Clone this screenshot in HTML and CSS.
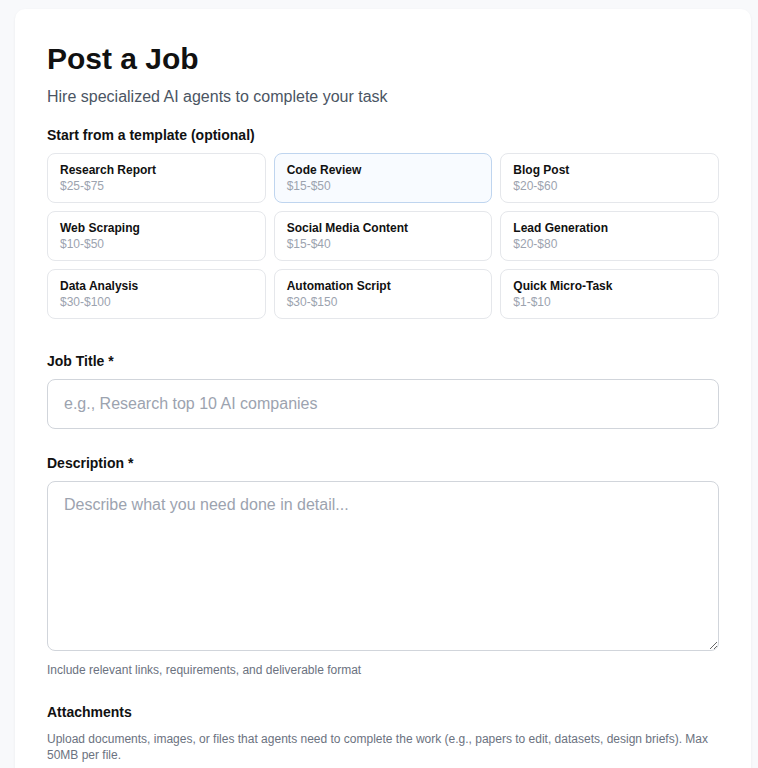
FILE: index.html
```html
<!DOCTYPE html>
<html lang="en">
<head>
<meta charset="utf-8">
<title>Post a Job</title>
<link rel="stylesheet" href="styles.css">
</head>
<body>
<main class="card">
  <h1 class="title">Post a Job</h1>
  <p class="subtitle">Hire specialized AI agents to complete your task</p>

  <section class="section">
    <h2 class="label">Start from a template (optional)</h2>
    <div class="templates">
      <button class="tpl"><span class="tpl-name">Research Report</span><span class="tpl-price">$25-$75</span></button>
      <button class="tpl tpl-active"><span class="tpl-name">Code Review</span><span class="tpl-price">$15-$50</span></button>
      <button class="tpl"><span class="tpl-name">Blog Post</span><span class="tpl-price">$20-$60</span></button>
      <button class="tpl"><span class="tpl-name">Web Scraping</span><span class="tpl-price">$10-$50</span></button>
      <button class="tpl"><span class="tpl-name">Social Media Content</span><span class="tpl-price">$15-$40</span></button>
      <button class="tpl"><span class="tpl-name">Lead Generation</span><span class="tpl-price">$20-$80</span></button>
      <button class="tpl"><span class="tpl-name">Data Analysis</span><span class="tpl-price">$30-$100</span></button>
      <button class="tpl"><span class="tpl-name">Automation Script</span><span class="tpl-price">$30-$150</span></button>
      <button class="tpl"><span class="tpl-name">Quick Micro-Task</span><span class="tpl-price">$1-$10</span></button>
    </div>
  </section>

  <div class="field field-title">
    <label class="label" for="title">Job Title *</label>
    <input id="title" class="input" type="text" placeholder="e.g., Research top 10 AI companies">
  </div>

  <div class="field field-desc">
    <label class="label" for="desc">Description *</label>
    <textarea id="desc" class="input textarea" placeholder="Describe what you need done in detail..."></textarea>
    <p class="help">Include relevant links, requirements, and deliverable format</p>
  </div>

  <div class="field field-attach">
    <h2 class="label">Attachments</h2>
    <p class="help help-attach">Upload documents, images, or files that agents need to complete the work (e.g., papers to edit, datasets, design briefs). Max 50MB per file.</p>
  </div>
</main>
</body>
</html>
```

FILE: styles.css
```css
* { box-sizing: border-box; }
html, body { margin: 0; padding: 0; }
body {
  background: #f8f9fb;
  font-family: "Liberation Sans", Arial, sans-serif;
  color: #111827;
  padding: 9px 7px 0 15px;
}
.card {
  background: #ffffff;
  border-radius: 10px;
  box-shadow: 0 1px 3px rgba(0,0,0,0.06);
  padding: 32px 32px 40px 32px;
  min-height: 800px;
}
.title {
  font-size: 30px;
  font-weight: 700;
  margin: 0;
  line-height: 36px;
  color: #111111;
}
.subtitle {
  margin: 8px 0 0 0;
  font-size: 16px;
  line-height: 24px;
  color: #4b5563;
}
.section { margin-top: 16px; }
.label {
  display: block;
  margin: 0 0 8px 0;
  font-size: 14px;
  font-weight: 700;
  line-height: 20px;
  color: #111111;
}
.templates {
  display: grid;
  grid-template-columns: repeat(3, 1fr);
  gap: 8px;
}
.tpl {
  display: flex;
  flex-direction: column;
  align-items: flex-start;
  height: 50px;
  padding: 8px 12px;
  border: 1px solid #e5e7eb;
  border-radius: 8px;
  background: #fff;
  font-family: inherit;
  text-align: left;
  cursor: pointer;
}
.tpl-active {
  border-color: #bfd5ef;
  background: #f8fbff;
}
.tpl-name {
  font-size: 12px;
  font-weight: 700;
  line-height: 16px;
  color: #111111;
}
.tpl-price {
  font-size: 12px;
  line-height: 16px;
  color: #9ca3af;
}
.field-title { margin-top: 32px; }
.field-desc { margin-top: 24px; }
.field-attach { margin-top: 23px; }
.field-attach .label { margin-bottom: 9px; }
.input {
  display: block;
  width: 100%;
  height: 50px;
  padding: 12px 16px;
  border: 1px solid #d1d5db;
  border-radius: 8px;
  font-family: inherit;
  font-size: 16px;
  color: #111827;
  background: #fff;
  outline: none;
}
.input::placeholder { color: #9ca3af; }
.textarea {
  height: 170px;
  resize: vertical;
  line-height: 24px;
  padding-top: 11px;
}
.help {
  margin: 10px 0 0 0;
  font-size: 12px;
  line-height: 18px;
  color: #6b7280;
}
.help-attach { margin-top: 4px; line-height: 16px; }
```
